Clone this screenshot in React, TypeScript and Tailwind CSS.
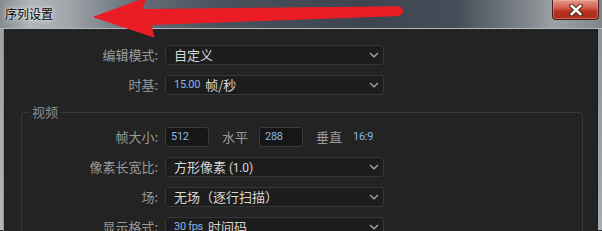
import React from "react";

const cjk = "font-['Noto_Sans_CJK_SC',sans-serif]";

function Chevron() {
  return (
    <svg width="10" height="6" viewBox="0 0 10 6" className="shrink-0">
      <polyline points="1,1 5,4.8 9,1" fill="none" stroke="#a8a8a8" strokeWidth="1.3" />
    </svg>
  );
}

function Num({ children }: { children: React.ReactNode }) {
  return (
    <span className="font-['Roboto','Noto_Sans_CJK_SC',sans-serif] text-[11px] tracking-[-0.3px] text-[#86b6e6]">
      {children}
    </span>
  );
}

function Dropdown({ children }: { children: React.ReactNode }) {
  return (
    <div className="ml-[7px] flex h-5 w-[219px] items-center justify-between rounded-[3px] border border-[#363636] bg-[#1d1d1d] pl-[8px] pr-[4px]">
      <div className="flex items-center gap-[5px] text-[13px] leading-[16px] text-[#d6d6d6]">{children}</div>
      <Chevron />
    </div>
  );
}

export default function App() {
  return (
    <div className={`relative flex h-[231px] w-[602px] flex-col overflow-hidden ${cjk}`}>
      {/* Title bar */}
      <div className="flex h-[29px] shrink-0 items-start justify-between border-b border-[#b4b8bc] bg-[linear-gradient(90deg,#858a8f_0%,#b2b6ba_5%,#a2a7ab_11%,#68707a_22%,#4a535d_36%,#3c4550_60%,#454e58_76%,#7e848a_87%,#9ca1a5_92%,#80868b_100%)]">
        <div className="pl-[5px] pt-[6px] text-[12px] leading-[15px] text-black [text-shadow:0_0_6px_rgba(255,255,255,0.95),0_0_2px_rgba(255,255,255,0.8)]">
          序列设置
        </div>
        <div className="mr-[3px] flex h-[20px] w-[47px] items-center justify-center rounded-b-[4px] border border-t-0 border-[#4b1f19] bg-[linear-gradient(180deg,#e39a8c_0%,#d4604c_40%,#b8311d_60%,#a8301f_100%)] shadow-[inset_0_0_0_1px_rgba(255,200,190,0.35)]">
          <svg width="14" height="12" viewBox="0 0 14 12">
            <path d="M2.5 1.8 L11.5 10.2 M11.5 1.8 L2.5 10.2" stroke="#3a1510" strokeWidth="4.4" strokeLinecap="round" />
            <path d="M2.5 1.8 L11.5 10.2 M11.5 1.8 L2.5 10.2" stroke="#ffffff" strokeWidth="2.6" strokeLinecap="round" />
          </svg>
        </div>
      </div>

      {/* Body */}
      <div className="flex flex-1">
        <div className="flex w-[3px] flex-col">
          <div className="flex-1 bg-[linear-gradient(180deg,#9da2a7,#b3b7bb)]" />
          <div className="h-[28px] bg-[#1e2a35]" />
        </div>

        <div className="flex flex-1 flex-col border-l border-[#8c9196] bg-[#232323] pt-[16px]">
          <div className="flex flex-col gap-[10px]">
            <div className="flex h-5 items-center">
              <div className="w-[154px] text-right text-[13px] leading-[16px] text-[#9a9a9a]">编辑模式:</div>
              <Dropdown>
                <span>自定义</span>
              </Dropdown>
            </div>
            <div className="flex h-5 items-center">
              <div className="w-[154px] text-right text-[13px] leading-[16px] text-[#9a9a9a]">时基:</div>
              <Dropdown>
                <Num>15.00</Num>
                <span>帧/秒</span>
              </Dropdown>
            </div>
          </div>

          <fieldset className="ml-[17px] mr-[14px] mt-[9px] rounded-[3px] border border-[#383838] px-0 pb-[20px] pt-[7px]">
            <legend className="ml-[8px] px-[2px] text-[13px] leading-[16px] text-[#8e8e8e]">视频</legend>
            <div className="flex flex-col gap-[10px]">
              <div className="flex h-5 items-center">
                <div className="w-[136px] text-right text-[13px] leading-[16px] text-[#9a9a9a]">帧大小:</div>
                <div className="ml-[7px] flex h-5 w-[44px] items-center rounded-[3px] border border-[#3a3a3a] bg-[#161616] pl-[5px]">
                  <Num>512</Num>
                </div>
                <div className="ml-[13px] text-[13px] leading-[16px] text-[#9a9a9a]">水平</div>
                <div className="ml-[11px] flex h-5 w-[44px] items-center rounded-[3px] border border-[#3a3a3a] bg-[#161616] pl-[5px]">
                  <Num>288</Num>
                </div>
                <div className="ml-[13px] text-[13px] leading-[16px] text-[#9a9a9a]">垂直</div>
                <div className="ml-[11px] flex items-center">
                  <Num>16:9</Num>
                </div>
              </div>
              <div className="flex h-5 items-center">
                <div className="w-[136px] text-right text-[13px] leading-[16px] text-[#9a9a9a]">像素长宽比:</div>
                <Dropdown>
                  <span>
                    方形像素 <span className="font-['Roboto','Noto_Sans_CJK_SC',sans-serif] text-[12px] tracking-[-0.2px]">(1.0)</span>
                  </span>
                </Dropdown>
              </div>
              <div className="flex h-5 items-center">
                <div className="w-[136px] text-right text-[13px] leading-[16px] text-[#9a9a9a]">场:</div>
                <Dropdown>
                  <span>无场（逐行扫描）</span>
                </Dropdown>
              </div>
              <div className="flex h-5 items-center">
                <div className="w-[136px] text-right text-[13px] leading-[16px] text-[#9a9a9a]">显示格式:</div>
                <Dropdown>
                  <Num>30 fps</Num>
                  <span>时间码</span>
                </Dropdown>
              </div>
            </div>
          </fieldset>
        </div>

        <div className="flex w-[5px] flex-col border-l border-[#1a1a1a]">
          <div className="flex-1 bg-[linear-gradient(180deg,#8e9398,#a7acb0)]" />
          <div className="h-[28px] bg-[#27323d]" />
        </div>
      </div>

      {/* Red annotation arrow */}
      <svg className="pointer-events-none absolute left-0 top-0" width="602" height="40" viewBox="0 0 602 40">
        <path
          d="M94,17 L146,-2 L142,9.5 L398,6.8 A4.4,4.4 0 0 1 398,15.6 L151,24.5 L154,37 Z"
          fill="#ec1c24"
          stroke="#ec1c24"
          strokeWidth="1"
          strokeLinejoin="round"
        />
      </svg>
    </div>
  );
}
